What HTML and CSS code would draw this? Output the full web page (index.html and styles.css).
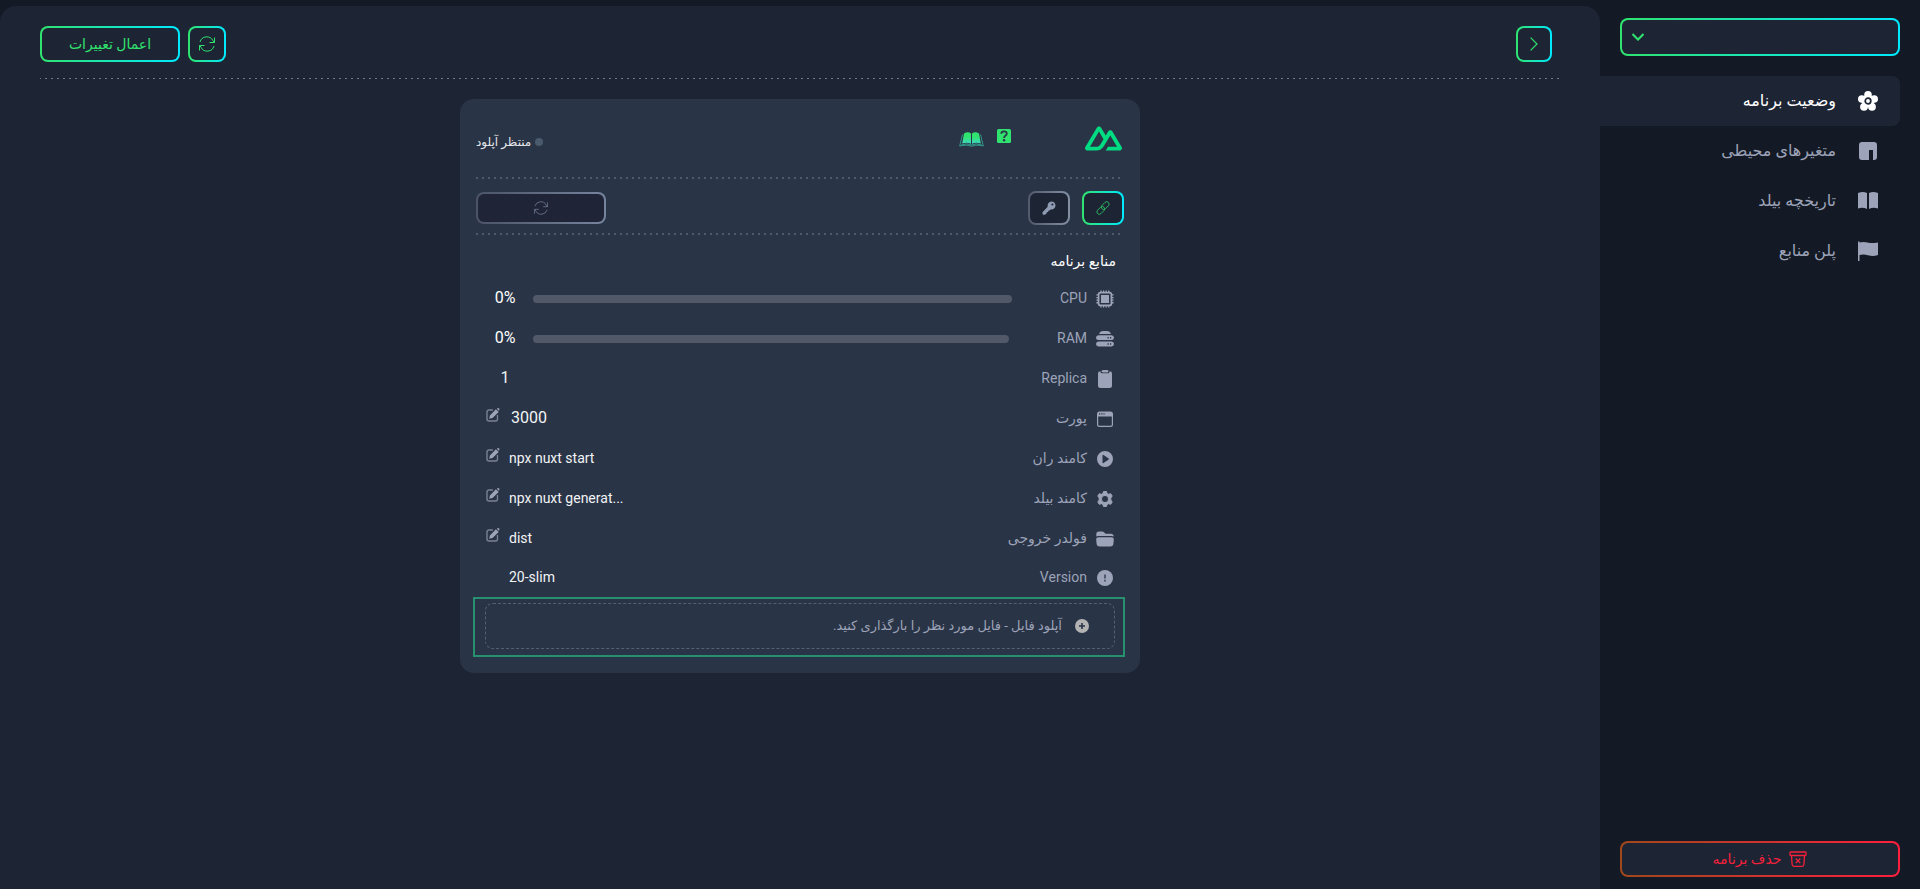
FILE: index.html
```html
<!DOCTYPE html>
<html lang="fa" dir="rtl">
<head>
<meta charset="utf-8">
<meta name="viewport" content="width=device-width, initial-scale=1">
<title>وضعیت برنامه</title>
<link rel="stylesheet" href="styles.css">
</head>
<body>
<svg class="defs" aria-hidden="true">
  <linearGradient id="book-fill" x1="0" y1="0" x2="0" y2="1"><stop offset="0.4" stop-color="#30e36f"/><stop offset="1" stop-color="#3fd9c4"/></linearGradient>
  <symbol id="i-sync" viewBox="0 0 16 16"><path d="M1 6a7 7 0 0 1 13-1.300L15.300 6.500M15.500 1.500V6.500H10.500M15 10A7 7 0 0 1 2 11.300L.700 9.500M.500 14.500V9.500H5.500" fill="none" stroke="currentColor"/></symbol>
  <symbol id="i-edit" viewBox="0 0 14 14"><path d="M7 2H3Q1 2 1 4v7q0 2 2 2h6.500q2 0 2-2V7" fill="none" stroke="currentColor" stroke-width="1.400" opacity=".7"/><path d="M3.200 10.800l.7-3.300 6-6.200 2.800 2.800-6.200 6zM10.900 .8l.6-.5q.8-.6 1.600.1t.1 1.700l-.6.6z" fill="currentColor"/></symbol>
</svg>
<div class="app">
  <aside class="sidebar">
    <select class="project-select" aria-label="انتخاب برنامه"><option></option></select>
    <nav class="nav">
      <a class="nav-item active" href="#status">
        <svg class="nav-icon" viewBox="0 0 20 20"><g fill="currentColor"><circle cx="10" cy="3.800" r="3.800"/><circle cx="16.200" cy="8" r="3.800"/><circle cx="14" cy="15.800" r="3.900"/><circle cx="6" cy="15.800" r="3.900"/><circle cx="3.800" cy="8" r="3.800"/><circle cx="10" cy="10" r="6.500"/></g><circle cx="10" cy="10" r="2.800" fill="none" stroke="#1d2433" stroke-width="1.700"/></svg>
        <span>وضعیت برنامه</span>
      </a>
      <a class="nav-item" href="#env">
        <svg class="nav-icon" viewBox="0 0 20 20"><path fill="currentColor" d="M4 1h12q3 0 3 3v12q0 3-3 3h-1V9h-4v10H4q-3 0-3-3V4q0-3 3-3z"/></svg>
        <span>متغیرهای محیطی</span>
      </a>
      <a class="nav-item" href="#history">
        <svg class="nav-icon" viewBox="0 0 20 20"><path fill="currentColor" d="M0 2q5-2 9 0v16q-4-2-9-.5zM11 2q4-2 9 0v15.500q-5-1.500-9 .5z"/></svg>
        <span>تاریخچه بیلد</span>
      </a>
      <a class="nav-item" href="#plan">
        <svg class="nav-icon" viewBox="0 0 20 20"><path fill="currentColor" d="M0 .5h1.500v1q4-1 8 0 4 1.200 10.500 0V14q-5 2-10 .3-4-1.300-8.500-.3v6H0z"/></svg>
        <span>پلن منابع</span>
      </a>
    </nav>
    <button class="delete-btn" type="button">
      <svg class="archive-icon" viewBox="0 0 18 16" fill="none" stroke="currentColor" stroke-width="1.300"><path d="M1.700 1h14.600q.7 0 .7.700v2q0 .8-.7.800H1.700Q1 4.500 1 3.700v-2Q1 1 1.700 1zM2.500 4.500l.6 9q.2 1.800 1.900 1.800h8q1.700 0 1.900-1.800l.6-9M6.700 7.500l4.600 4.600M11.300 7.500l-4.600 4.600"/></svg>
      <span>حذف برنامه</span>
    </button>
  </aside>

  <main class="main">
    <header class="toolbar">
      <button class="btn btn-square" type="button" aria-label="بعدی"><svg class="chevron" viewBox="0 0 8 14"><path d="M.6 .6L7 7 .6 13.400" fill="none" stroke="currentColor" stroke-width="1.200"/></svg></button>
      <div class="toolbar-actions">
        <button class="btn btn-refresh" type="button" aria-label="بارگذاری مجدد"><svg class="icon-16"><use href="#i-sync"/></svg></button>
        <button class="btn btn-apply" type="button">اعمال تغییرات</button>
      </div>
    </header>

    <section class="card">
      <div class="card-head">
        <svg class="logo" viewBox="0 4 24 16" role="img" aria-label="Nuxt"><path fill="#00dc82" d="M13.4642 19.8295h8.9218c.2834 0 .5618-.0723.8072-.2098a1.5899 1.5899 0 0 0 .5908-.5732 1.5293 1.5293 0 0 0 .216-.783 1.529 1.529 0 0 0-.2167-.7828L17.7916 7.4142a1.5904 1.5904 0 0 0-.5907-.573 1.6524 1.6524 0 0 0-.807-.2099c-.2833 0-.5616.0724-.807.2098a1.5904 1.5904 0 0 0-.5907.5731L13.4642 9.99l-2.9954-5.0366a1.5913 1.5913 0 0 0-.591-.573 1.6533 1.6533 0 0 0-.8071-.2098c-.2834 0-.5617.0723-.8072.2097a1.5913 1.5913 0 0 0-.591.573L.2168 17.4808A1.5292 1.5292 0 0 0 0 18.2635c-.0001.2749.0744.545.216.783a1.59 1.59 0 0 0 .5908.5732c.2454.1375.5238.2098.8072.2098h5.6003c2.219 0 3.8554-.9454 4.9813-2.7899l2.7337-4.5922L16.3935 9.99l4.3944 7.382h-5.8586ZM7.123 17.3694l-3.9083-.0009 5.8586-9.8421 2.9232 4.921-1.9572 3.2892c-.7478 1.1967-1.5972 1.6328-2.9163 1.6328z"/></svg>
        <div class="help-links">
          <a href="#help" aria-label="راهنما"><svg class="help-icon" viewBox="0 0 14 14"><rect width="14" height="14" rx="1.500" fill="#30e36f"/><path d="M4.200 4.800Q4.300 2.300 7 2.300t2.800 2.300Q9.800 6 8.300 6.800 7.100 7.500 7.100 8.900" fill="none" stroke="#293446" stroke-width="1.800"/><circle cx="7.100" cy="11.300" r="1.200" fill="#293446"/></svg></a>
          <a href="#docs" aria-label="مستندات"><svg class="docs-icon" viewBox="0 0 25 15"><path fill="url(#book-fill)" d="M5 1.500Q9-.8 12 1.500v10.300Q8 9.800 3.200 11.500zM20 1.500Q16-.8 13 1.500v10.300q4-2 8.800-.3z"/><path fill="none" stroke="#37cfae" stroke-width=".8" opacity=".8" d="M3.500 2.500L.7 14Q8 12.400 11 14h3q3-1.600 10.300 0L21.500 2.500M2.500 12.800Q8 10.800 12.500 13q4.500-2.200 10-.2"/></svg></a>
        </div>
        <div class="status"><span class="status-dot"></span><span>منتظر آپلود</span></div>
      </div>
      <div class="dots"></div>
      <div class="card-actions">
        <a class="btn btn-tool" href="#link" aria-label="لینک"><svg class="icon-14" viewBox="0 0 14 14" fill="none" stroke="currentColor" stroke-width=".9" opacity=".8"><rect x="4.700" y="2.200" width="9" height="4.800" rx="2.400" transform="rotate(-45 9.200 4.600)"/><rect x=".3" y="7" width="9" height="4.800" rx="2.400" transform="rotate(-45 4.800 9.400)"/></svg></a>
        <button class="btn btn-tool btn-muted" type="button" aria-label="کلید"><svg class="icon-14" viewBox="0 0 14 14"><path fill="currentColor" fill-rule="evenodd" d="M9.500 .5a4 4 0 1 1-.9 7.900l-1 1.100-1.300.2-.2 1.400-1.300.2L4.500 12.600 3 13.700H1.300Q.3 13.500.5 12.500V11.200L5.700 5.800A4.200 4.200 0 0 1 9.500.5zm.9 1.900a1.100 1.100 0 1 0 0 2.200 1.100 1.100 0 0 0 0-2.200z"/></svg></button>
        <button class="btn btn-restart" type="button" disabled aria-label="راه‌اندازی مجدد"><svg class="icon-14"><use href="#i-sync"/></svg></button>
      </div>
      <div class="dots"></div>

      <h2 class="card-title">منابع برنامه</h2>
      <div class="rows">
        <div class="row">
          <svg class="row-icon" viewBox="0 0 18 18"><rect x="2.600" y="2.600" width="12.800" height="12.800" rx="2" fill="none" stroke="currentColor" stroke-width="1.700"/><rect x="5" y="5" width="8" height="8" fill="currentColor"/><path d="M4.300 1.200h10M4.300 16.800h10M1.200 4.300v10M16.800 4.300v10" stroke="currentColor" stroke-width="1.600" stroke-dasharray="1.300 1.300"/></svg>
          <span class="label">CPU</span><div class="bar" role="progressbar" aria-label="CPU" aria-valuenow="0"></div><span class="percent" dir="ltr">0%</span>
        </div>
        <div class="row">
          <svg class="row-icon" viewBox="0 0 18 18"><path fill="currentColor" fill-rule="evenodd" d="M3 4Q4 1 7 1h4q3 0 4 3zM2.500 5.300h13q2.500.3 2.500 2.500t-2.500 2.300h-13Q0 10 0 7.800t2.500-2.500zM11.500 7v1.500h1.200V7zm2.500 0v1.500h1.200V7zM2.500 11.500h13q2.500.3 2.500 2.500t-2.500 2.400h-13Q0 16.200 0 14t2.500-2.500zm9 1.700v1.500h1.200v-1.500zm2.500 0v1.500h1.200v-1.500z"/></svg>
          <span class="label">RAM</span><div class="bar" role="progressbar" aria-label="RAM" aria-valuenow="0"></div><span class="percent" dir="ltr">0%</span>
        </div>
        <div class="row">
          <svg class="row-icon" viewBox="0 0 18 18"><path fill="currentColor" d="M4.300 1.200l.2.800q.4 1.200 1.500 1.200h6q1.100 0 1.500-1.200l.2-.8Q16 1.200 16 3.500v12q0 2.500-2.500 2.500h-9Q2 18 2 15.500v-12q0-2.300 2.300-2.300zM7 0h4q1.500 0 1.500 1.300T11 2.400H7q-1.500 0-1.500-1.100T7 0z"/></svg>
          <span class="label">Replica</span><span class="value value-count">1</span>
        </div>
        <div class="row">
          <svg class="row-icon" viewBox="0 0 18 18"><path fill="currentColor" fill-rule="evenodd" d="M3.500 1.500h11Q17 1.500 17 4v10.500q0 2.500-2.500 2.500h-11Q1 17 1 14.500V4q0-2.500 2.500-2.500zM2.200 6.500v8q0 1.300 1.300 1.300h11q1.300 0 1.300-1.300v-8zM3 3.300v1.200h1.200V3.300zm2.200 0v1.200h1.200V3.300zm2.200 0v1.200h1.200V3.300z"/></svg>
          <span class="label">پورت</span><span class="value value-port" dir="ltr">3000</span><button class="edit" type="button" aria-label="ویرایش پورت"><svg class="icon-14"><use href="#i-edit"/></svg></button>
        </div>
        <div class="row">
          <svg class="row-icon" viewBox="0 0 18 18"><path fill="currentColor" fill-rule="evenodd" d="M9 1a8 8 0 1 1 0 16A8 8 0 0 1 9 1zM6.500 5.300v7.400q.3.700 1 .3l5.200-3.500q.5-.5 0-1L7.500 5q-.7-.4-1 .3z"/></svg>
          <span class="label">کامند ران</span><span class="value" dir="ltr">npx nuxt start</span><button class="edit" type="button" aria-label="ویرایش کامند ران"><svg class="icon-14"><use href="#i-edit"/></svg></button>
        </div>
        <div class="row">
          <svg class="row-icon" viewBox="0 0 18 18"><path fill="currentColor" fill-rule="evenodd" d="M7.500 1.500h3l.6 2 1.400.8 2.200-.6L16.200 6 14.800 8v2l1.400 2-1.500 2.300-2.200-.6-1.400.8-.6 2h-3l-.6-2-1.400-.8-2.200.6L1.800 12l1.400-2V8L1.800 6l1.500-2.300 2.200.6 1.400-.8zM9 5.400a3.600 3.600 0 1 0 0 7.200 3.600 3.600 0 0 0 0-7.200z" stroke="currentColor" stroke-linejoin="round"/></svg>
          <span class="label">کامند بیلد</span><span class="value" dir="ltr">npx nuxt generat...</span><button class="edit" type="button" aria-label="ویرایش کامند بیلد"><svg class="icon-14"><use href="#i-edit"/></svg></button>
        </div>
        <div class="row">
          <svg class="row-icon" viewBox="0 0 18 18"><path fill="currentColor" d="M.3 6.500V4Q.3 1.500 3 1.500h3q1.200 0 2 .8l1 .9q.5.500 1.500.5H15q2.500 0 2.800 2.800-1-.5-2-.5H2.300q-1 0-2 .5zM2.500 7.300h13q2.500.2 2.300 2.500l-.4 4q-.3 2.700-3 2.700H3.600q-2.700 0-3-2.700l-.4-4Q0 7.500 2.500 7.300z"/></svg>
          <span class="label">فولدر خروجی</span><span class="value" dir="ltr">dist</span><button class="edit" type="button" aria-label="ویرایش فولدر خروجی"><svg class="icon-14"><use href="#i-edit"/></svg></button>
        </div>
        <div class="row row-last">
          <svg class="row-icon" viewBox="0 0 18 18"><circle cx="9" cy="9" r="8" fill="currentColor"/><path d="M9 5.500v4M9 10.700v1.700" stroke="#3a465a" stroke-width="1.600"/></svg>
          <span class="label">Version</span><span class="value value-plain" dir="ltr">20-slim</span>
        </div>
      </div>
      <div class="upload">
        <button class="upload-zone" type="button">
          <svg class="icon-14" viewBox="0 0 14 14"><circle cx="7" cy="7" r="7" fill="#b3b3b3"/><path d="M7 4v6M4 7h6" stroke="#293446" stroke-width="1.600"/></svg>
          <span>آپلود فایل - فایل مورد نظر را بارگذاری کنید.</span>
        </button>
      </div>
    </section>
  </main>
</div>
</body>
</html>
```
FILE: styles.css
```css
:root {
  --bg: #141a25;
  --panel: #1d2433;
  --card: #293446;
  --muted: #9da3b8;
  --green: #30e36f;
  --accent: linear-gradient(90deg, #30e36f, #00eaff);
}
* { box-sizing: border-box; }
body {
  margin: 0;
  background: var(--bg);
  color: #fff;
  font: 14px/20px Roboto, "DejaVu Sans", sans-serif;
}
button, select { font: inherit; color: inherit; cursor: pointer; }
a { color: inherit; text-decoration: none; }
svg { display: block; flex: none; }
.defs { position: absolute; width: 0; height: 0; }
.app { display: flex; min-height: 100vh; }

.sidebar {
  flex: 0 0 320px;
  display: flex;
  flex-direction: column;
  padding: 18px 20px 12px 0;
}
.project-select {
  height: 38px;
  margin: 0 0 20px 20px;
  border: 2px solid transparent;
  border-radius: 8px;
  appearance: none;
  outline: none;
  background:
    url("data:image/svg+xml,%3Csvg xmlns='http://www.w3.org/2000/svg' viewBox='0 0 12 8'%3E%3Cpath d='M.5 1l5.500 5.500L11.500 1' fill='none' stroke='%2330e36f' stroke-width='2'/%3E%3C/svg%3E") left 10px center / 12px 8px no-repeat padding-box,
    linear-gradient(var(--panel), var(--panel)) padding-box,
    var(--accent) border-box;
}
.nav { display: flex; flex-direction: column; }
.nav-item {
  display: flex;
  align-items: center;
  gap: 22px;
  height: 50px;
  padding: 0 22px;
  color: var(--muted);
  font-size: 16px;
  border-radius: 0 8px 8px 0;
}
.nav-item.active { background: var(--panel); color: #fff; }
.nav-icon { width: 20px; height: 20px; }
.delete-btn {
  display: flex;
  align-items: center;
  justify-content: center;
  gap: 8px;
  height: 36px;
  margin-top: auto;
  margin-left: 20px;
  padding: 0 6px 0 6px;
  color: #f5203b;
  border: 2px solid transparent;
  border-radius: 8px;
  background:
    linear-gradient(var(--panel), var(--panel)) padding-box,
    linear-gradient(90deg, #a0481c, #ff1f3d) border-box;
}
.archive-icon { width: 18px; height: 16px; }

.main {
  flex: 1;
  min-width: 0;
  margin-top: 6px;
  padding: 20px 40px;
  background: var(--panel);
  border-radius: 16px 16px 0 0;
}
.toolbar {
  display: flex;
  justify-content: space-between;
  padding: 0 8px 17px 0;
  background: repeating-linear-gradient(90deg, #717b8f 0 1px, transparent 1px 5px, #717b8f 5px 6px) bottom / 100% 1px no-repeat;
}
.toolbar-actions { display: flex; gap: 8px; }
.btn {
  display: flex;
  align-items: center;
  justify-content: center;
  height: 36px;
  padding: 0;
  color: var(--green);
  border: 2px solid transparent;
  border-radius: 8px;
  background:
    linear-gradient(var(--panel), var(--panel)) padding-box,
    var(--accent) border-box;
}
.btn-square { width: 36px; }
.btn-refresh { width: 38px; }
.btn-apply { width: 140px; }
.chevron { width: 8px; height: 14px; }
.icon-16 { width: 16px; height: 16px; }
.icon-14 { width: 14px; height: 14px; }

.card {
  max-width: 680px;
  margin: 20px auto 0;
  padding: 0 16px 16px;
  background: var(--card);
  border-radius: 14px;
}
.card-head {
  display: flex;
  align-items: center;
  height: 78px;
}
.logo { width: 37px; height: 25px; margin-right: 2px; }
.help-links { display: flex; gap: 13px; margin-right: 74px; }
.help-icon { width: 14px; height: 14px; }
.docs-icon { width: 25px; height: 15px; margin-top: 3px; }
.status {
  display: flex;
  align-items: center;
  gap: 4px;
  margin-right: auto;
  padding-top: 8px;
  color: #e4e6ea;
  font-size: 12px;
}
.status-dot { width: 8px; height: 8px; border-radius: 50%; background: #495a6c; }
.dots {
  height: 2px;
  background: repeating-linear-gradient(90deg, #4f5a6b 0 2px, transparent 2px 6px);
}
.card-actions {
  display: flex;
  align-items: center;
  gap: 12px;
  height: 54px;
  padding-top: 4px;
}
.btn-tool { width: 42px; height: 34px; }
.btn-muted, .btn-restart {
  color: #8f9bb3;
  background:
    linear-gradient(var(--panel), var(--panel)) padding-box,
    linear-gradient(90deg, #51596c, #8490a4) border-box;
}
.btn-restart {
  width: 130px;
  height: 32px;
  margin-right: auto;
  color: #68748a;
  background:
    linear-gradient(#1f2537, #1f2537) padding-box,
    linear-gradient(90deg, #4b5467, #76849c) border-box;
}
.card-title {
  margin: 16px 8px 7px;
  font-size: 14px;
  font-weight: 400;
  line-height: 20px;
}
.row {
  display: flex;
  align-items: center;
  height: 40px;
  padding: 0 10px;
  color: var(--muted);
}
.row-last { height: 37px; }
.row-icon { width: 18px; height: 18px; margin-top: 2px; }
.label { margin-right: 9px; }
.bar {
  flex: 1;
  height: 8px;
  margin-top: 2px;
  margin-right: 48px;
  border-radius: 4px;
  background: #515968;
}
.percent {
  width: 38px;
  margin-right: 9px;
  color: #fff;
  font-size: 16px;
  text-align: center;
}
.value { margin-right: auto; color: #f2f3f5; }
.value-count, .value-port { font-size: 16px; }
.value-count { width: 38px; text-align: center; }
.value-plain { margin-left: 23px; }
.edit {
  padding: 0 0 6px;
  margin-right: 9px;
  border: 0;
  background: none;
  color: var(--muted);
}
.value-port + .edit { margin-right: 11px; }
.upload {
  margin: 2px -1px 0 -3px;
  padding: 4px 8px 6px 10px;
  border: 2px solid #27916f;
}
.upload-zone {
  display: flex;
  align-items: center;
  gap: 13px;
  width: 100%;
  height: 46px;
  padding: 0 25px;
  color: var(--muted);
  font-size: 13px;
  border: 1px dashed #556073;
  border-radius: 8px;
  background: none;
}
```
